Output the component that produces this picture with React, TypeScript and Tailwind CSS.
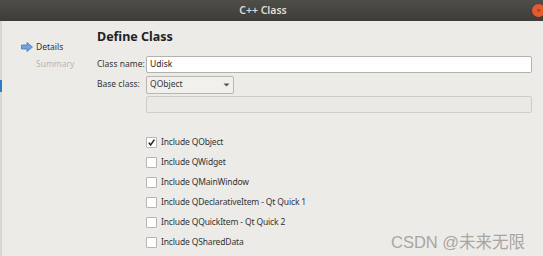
import React from "react";

const F = { fontFamily: '"Noto Sans", "Open Sans", sans-serif' };

function Check({ checked, label }: { checked?: boolean; label: string }) {
  return (
    <div className="flex items-center h-[20px]">
      <div className="w-[11px] h-[11px] border border-[#b8b5b0] bg-white rounded-[1px] flex items-center justify-center shrink-0">
        {checked && (
          <svg width="9" height="9" viewBox="0 0 9 9">
            <path d="M1.8 4.6 L3.6 7 L7.4 1.6" stroke="#222" strokeWidth="1.5" fill="none" />
          </svg>
        )}
      </div>
      <span className="ml-[4px] text-[8.5px] tracking-[-0.15px] text-[#333] whitespace-nowrap">{label}</span>
    </div>
  );
}

export default function App() {
  return (
    <div className="w-[543px] h-[256px] overflow-hidden bg-[#edebe7] relative" style={F}>
      <div className="h-[21px] bg-gradient-to-b from-[#504e49] to-[#3d3c38] flex items-center justify-center relative pr-[17px]">
        <span className="text-[10.5px] font-semibold text-[#dfdbd2]">C++ Class</span>
        <div className="absolute left-[532px] top-[4px] w-[13px] h-[13px] rounded-full bg-[#e65a30] flex items-center justify-center">
          <span className="text-[7px] text-[#7a2a10] leading-none">×</span>
        </div>
      </div>
      <div className="flex h-[235px]">
        <div className="w-[2px] bg-[#d8d6d2] relative">
          <div className="absolute left-0 top-[59px] w-[2px] h-[12px] bg-[#2e7cc4]" />
        </div>
        <div className="w-[95px] pt-[19px] pl-[19px]">
          <div className="flex items-center h-[14px]">
            <svg width="12" height="10" viewBox="0 0 12 10">
              <path d="M0.5 3 H6 V0.5 L11.5 5 L6 9.5 V7 H0.5 Z" fill="#6fa4e0" stroke="#3f78c0" strokeWidth="0.8" />
            </svg>
            <span className="ml-[3px] text-[8.5px] text-[#333]">Details</span>
          </div>
          <div className="h-[14px] mt-[3px] pl-[15px] text-[8.5px] text-[#b9b6b1] leading-[14px]">Summary</div>
        </div>
        <div className="flex-1 pr-[11px]">
          <div className="pt-[7px] h-[31px] text-[12.5px] font-bold text-[#222]">Define Class</div>
          <div className="flex items-center h-[18px] mt-[3px]">
            <span className="w-[49px] shrink-0 whitespace-nowrap text-[8.5px] text-[#333]">Class name:</span>
            <div className="flex-1 h-[17px] bg-white border border-[#b3b1ac] rounded-[2px] flex items-center px-[3px] text-[8.5px] text-[#222]">Udisk</div>
          </div>
          <div className="flex items-center h-[19px] mt-[2px]">
            <span className="w-[49px] shrink-0 whitespace-nowrap text-[8.5px] text-[#333]">Base class:</span>
            <div className="w-[88px] h-[18px] bg-[#f2f0ed] border border-[#b8b6b1] rounded-[2px] flex items-center justify-between px-[3px] text-[8.5px] text-[#333]">
              <span>QObject</span>
              <svg width="7" height="4" viewBox="0 0 7 4"><path d="M0.5 0.5 H6.5 L3.5 3.5 Z" fill="#555" /></svg>
            </div>
          </div>
          <div className="flex mt-[2px]">
            <div className="w-[49px] shrink-0" />
            <div className="flex-1 h-[17px] bg-[#ebe9e5] border border-[#cfcdc8] rounded-[2px]" />
          </div>
          <div className="pl-[49px] mt-[19px]">
            <Check checked label="Include QObject" />
            <Check label="Include QWidget" />
            <Check label="Include QMainWindow" />
            <Check label="Include QDeclarativeItem - Qt Quick 1" />
            <Check label="Include QQuickItem - Qt Quick 2" />
            <Check label="Include QSharedData" />
          </div>
        </div>
      </div>
      <div
        className="absolute left-[391px] top-[230px] text-[16.5px] text-[#a8a6a2] whitespace-nowrap"
        style={{ fontFamily: '"Liberation Sans", "Noto Sans CJK SC", sans-serif' }}
      >
        CSDN @未来无限
      </div>
    </div>
  );
}
